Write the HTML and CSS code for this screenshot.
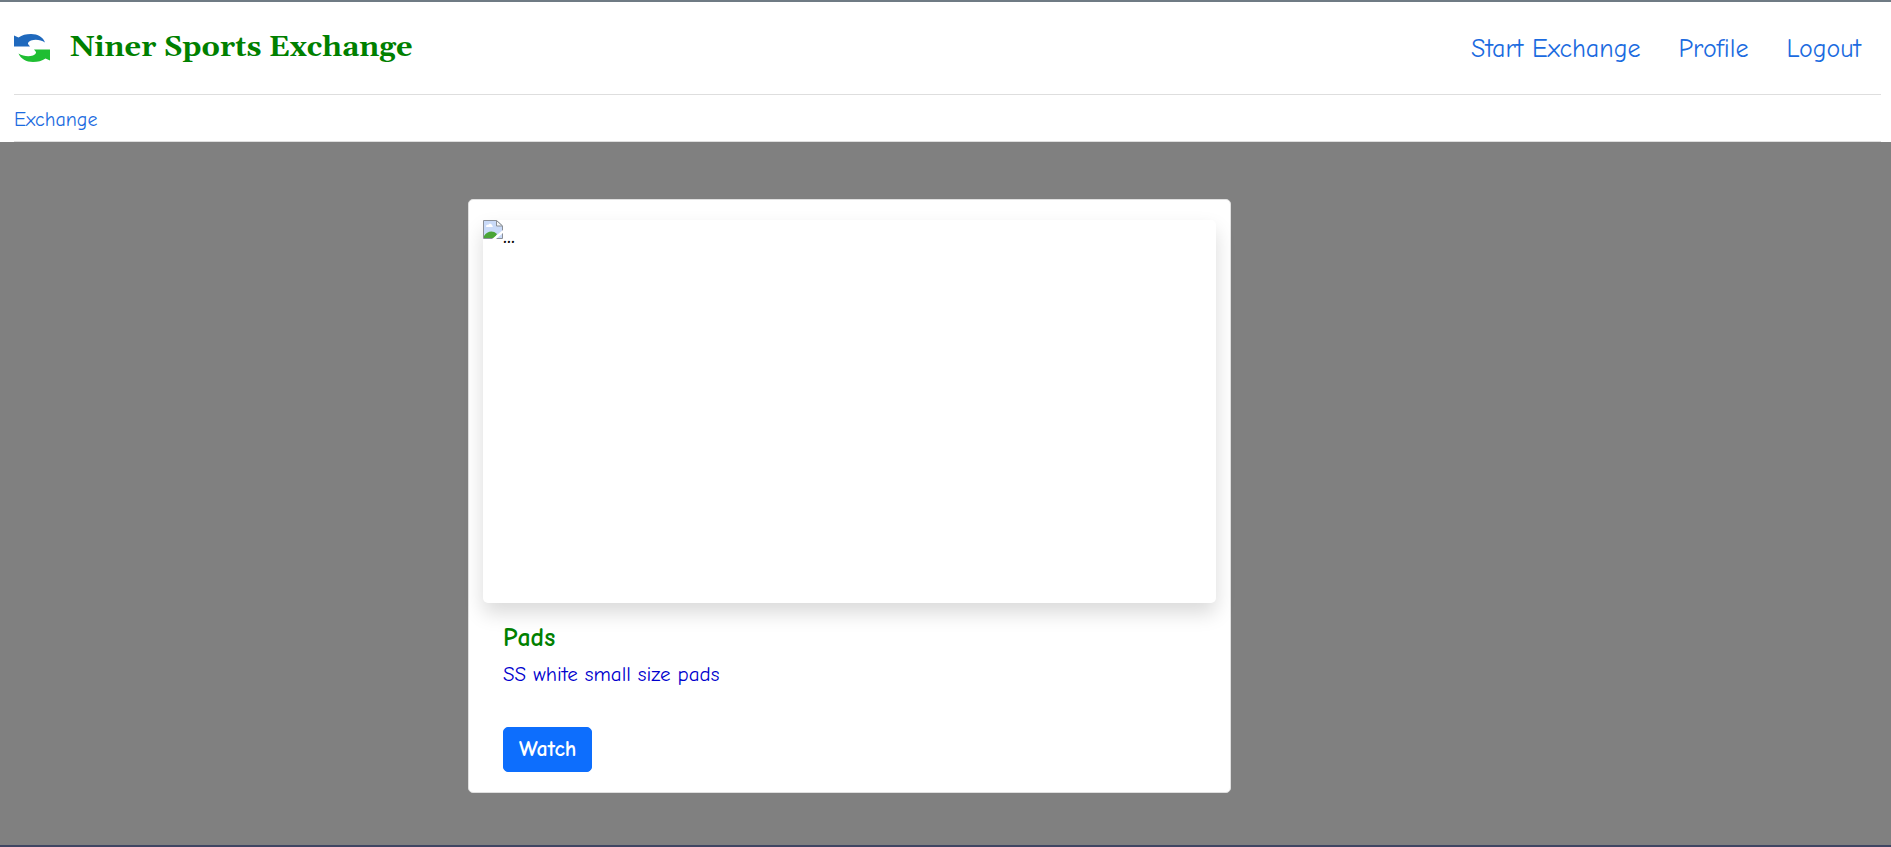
FILE: index.html
```html
<!DOCTYPE html>
<html lang="en">
<head>
<meta charset="utf-8">
<title>Niner Sports Exchange</title>
<link rel="stylesheet" href="styles.css">
</head>
<body>
<header class="header">
  <div class="topbar">
    <a class="brand" href="#">
      <svg class="logo" viewBox="0 0 36 28" aria-hidden="true">
        <path fill="#1f69bd" d="M0 1.500 4.500 3.500C8 1 12 0 17 0c7 0 12 3 14 8.500C27 6 22 5 17 6.500c-2 .700-3.200 2-3 3.500l2 2.500H0z"/>
        <path fill="#1fbe32" d="M36 26.500l-4.500-2C28 27 24 28 19 28 12 28 7 25 4.500 19.500 9 22 14 23 19 21.500c2-.700 3.200-2 3-3.500l-2-2.500h16z"/>
      </svg>
      <span class="brand-name">Niner Sports Exchange</span>
    </a>
    <nav class="nav">
      <a href="#">Start Exchange</a>
      <a href="#">Profile</a>
      <a href="#">Logout</a>
    </nav>
  </div>
  <nav class="subnav"><a href="#">Exchange</a></nav>
</header>
<main class="main">
  <article class="card">
    <div class="photo" role="img" aria-label="Pads">
      <svg class="broken" viewBox="0 0 20 20" aria-hidden="true">
        <path fill="#c9daf8" d="M1 1h12l6 5v13H1z"/>
        <path fill="#fff" d="M3 6.500c0-1.500 1.500-2 2.200-1.500C6 3 9 3.500 9 5.500c1.200 0 1.200 1.500 0 1.500H3.500z"/>
        <path fill="#4aa537" d="M1 19v-3c3-5 9-6 13-2l-3 5z"/>
        <path fill="none" stroke="#8b9098" d="M.500 18.500V.500h13l6 5.500v12.500z"/>
        <path fill="#f4f5f7" stroke="#8b9098" d="M13.500.500V6h6z"/>
        <path fill="#fff" d="M20 10v3l-7 6H9z"/>
      </svg>
      <span>...</span>
    </div>
    <div class="card-body">
      <h1 class="title">Pads</h1>
      <p class="text">SS white small size pads</p>
      <button class="button" type="button">Watch</button>
    </div>
  </article>
</main>
</body>
</html>
```
FILE: styles.css
```css
* { box-sizing: border-box; }

body {
  display: flex;
  flex-direction: column;
  min-height: 100vh;
  margin: 0;
  border-top: 2px solid #6f7b84;
  border-bottom: 2px solid #3f4663;
  background: #808080;
  font-family: "Comic Sans MS", "Comic Neue", "Noto Sans", sans-serif;
  font-size: 21px;
  line-height: 30px;
}

a { color: #1b6be0; text-decoration: none; }

.header { padding: 0 10px 0 14px; background: #fff; }

.topbar {
  display: flex;
  align-items: center;
  justify-content: space-between;
  padding: 22px 20px 22px 0;
  border-bottom: 1px solid #dedede;
}

.brand { display: flex; align-items: center; gap: 20px; }

.logo { width: 36px; height: 28px; }

.brand-name {
  color: #008000;
  font-family: Georgia, Gelasio, "Liberation Serif", serif;
  font-size: 29px;
  font-weight: 700;
  line-height: 48px;
}

.nav {
  display: flex;
  gap: 38px;
  padding-top: 2px;
  font-size: 26px;
  font-weight: 500;
  line-height: 46px;
}

.subnav { padding: 10px 0 6px; border-bottom: 1px solid #dedede; font-size: 20px; }

.main {
  display: grid;
  flex: 1;
  grid-template-columns: 468fr 763fr 660fr;
  align-items: start;
  padding: 57px 0 50px;
}

.card {
  grid-column: 2;
  padding: 20px 14px;
  border: 1px solid #dfdfdf;
  border-radius: 5px;
  background: #fff;
}

.photo {
  display: flex;
  align-items: flex-start;
  aspect-ratio: 733 / 383;
  border-radius: 5px;
  box-shadow: 0 10px 20px rgba(0, 0, 0, 0.15);
}

.photo span { font-size: 26px; line-height: 30px; }

.broken { width: 20px; height: 20px; }

.card-body { padding: 20px 20px 0; }

.title { margin: 0 0 6px; color: #008000; font-size: 26px; line-height: 30px; }

.text { margin: 0 0 38px; color: #0000cd; }

.button {
  display: block;
  padding: 7px 15px;
  border: 1px solid #0d6efd;
  border-radius: 5px;
  background: #0d6efd;
  color: #fff;
  font: inherit;
  font-size: 22px;
  font-weight: 600;
  line-height: 29px;
}
```
